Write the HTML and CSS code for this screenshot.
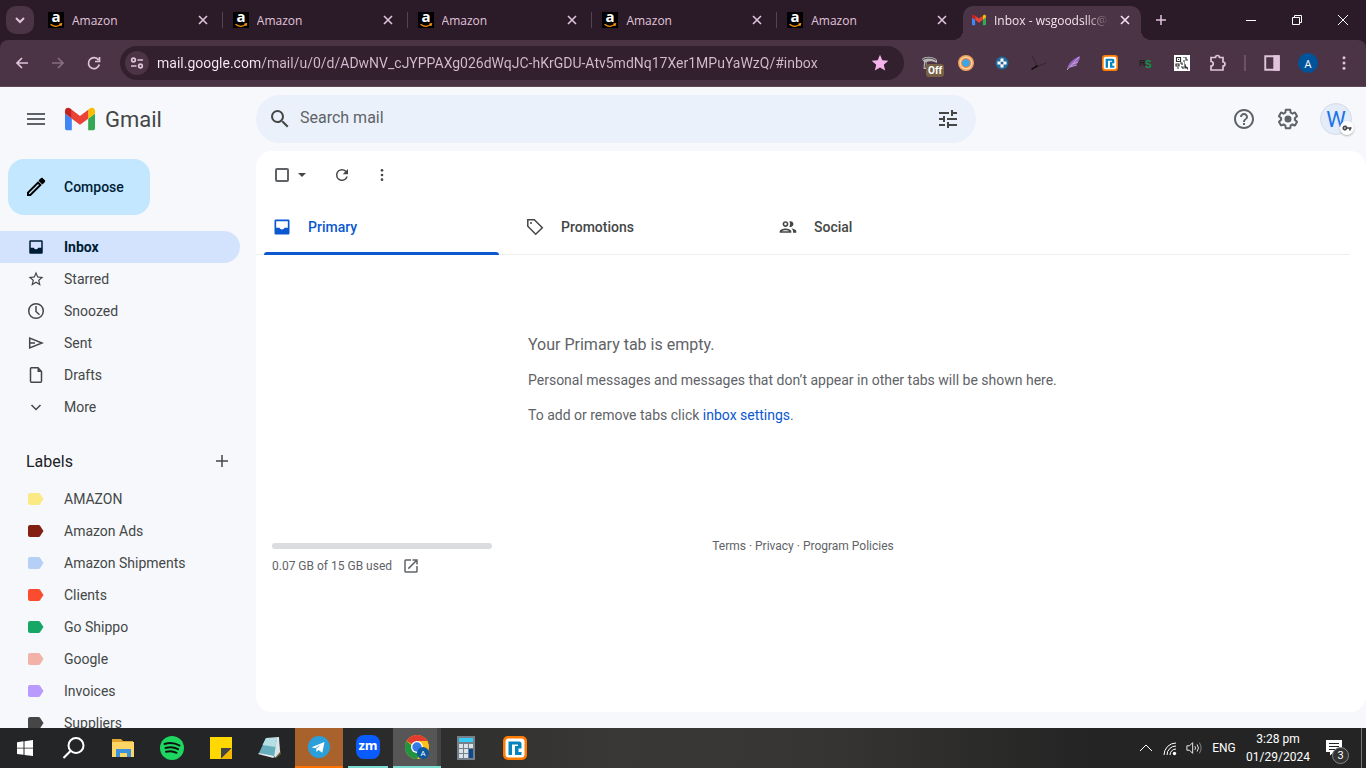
FILE: index.html
```html
<!DOCTYPE html>
<html lang="en">
  <head>
    <meta charset="utf-8">
    <title>Inbox - Gmail</title>
    <link rel="stylesheet" href="styles.css">
  </head>
  <body>
    <!-- shared icons -->
    <svg class="sprite" aria-hidden="true">
      <symbol id="amazon" viewBox="0 0 16 16">
        <rect width="16" height="16" fill="#000"/>
        <text x="8" y="10" text-anchor="middle" font-family="Open Sans, sans-serif" font-weight="700" font-size="15" fill="#fff">a</text>
        <path d="M2.5 12.2c3.3 2.4 7.5 2.4 10.3.4M11.3 12l2.2-.2-.6 2" fill="none" stroke="#f90" stroke-width="1.2"/>
      </symbol>
      <symbol id="close" viewBox="0 0 16 16"><path d="M4 4l8 8M12 4l-8 8" fill="none" stroke="currentColor" stroke-width="1.6"/></symbol>
      <symbol id="gmail" viewBox="52 42 88 66">
        <path fill="#4285f4" d="M58 108h14V74L52 59v43c0 3.32 2.69 6 6 6"/>
        <path fill="#34a853" d="M120 108h14c3.32 0 6-2.69 6-6V59l-20 15"/>
        <path fill="#fbbc04" d="M120 48v26l20-15v-8c0-7.42-8.47-11.65-14.4-7.2"/>
        <path fill="#ea4335" d="M72 74V48l24 18 24-18v26L96 92"/>
        <path fill="#c5221f" d="M52 51v8l20 15V48l-5.6-4.2c-5.94-4.45-14.4-.22-14.4 7.2"/>
      </symbol>
      <symbol id="refresh" viewBox="0 0 24 24"><path d="M17.65 6.35A7.96 7.96 0 0 0 12 4a8 8 0 1 0 7.73 10h-2.08A6 6 0 1 1 12 6c1.66 0 3.14.69 4.22 1.78L13 11h7V4l-2.35 2.35z"/></symbol>
      <symbol id="dots" viewBox="0 0 24 24"><circle cx="12" cy="5" r="2"/><circle cx="12" cy="12" r="2"/><circle cx="12" cy="19" r="2"/></symbol>
      <symbol id="inbox" viewBox="0 0 24 24"><path fill-rule="evenodd" d="M4.5 3h15A1.5 1.5 0 0 1 21 4.5v15a1.5 1.5 0 0 1-1.5 1.5h-15A1.5 1.5 0 0 1 3 19.5v-15A1.5 1.5 0 0 1 4.5 3zM5 5v8h4c.6 1.3 1.7 2 3 2s2.4-.7 3-2h4V5z"/></symbol>
      <symbol id="label" viewBox="0 0 16 12"><path d="M2 0h8.5c.8 0 1.3.3 1.7.9L15.5 6l-3.3 5.1c-.4.6-.9.9-1.7.9H2a2 2 0 0 1-2-2V2a2 2 0 0 1 2-2z"/></symbol>
      <symbol id="ringr" viewBox="0 0 24 24">
        <rect width="24" height="24" rx="5" fill="#ff7a00"/>
        <rect x="2.5" y="2.5" width="19" height="19" rx="3" fill="#fff"/>
        <path d="M5.500 19V5.500H16a2.500 2.500 0 0 1 2.500 2.500v4.500h-3V16h3v3H12v-9h3V8.500H9V19z" fill="#0684bd"/>
      </symbol>
    </svg>

    <header class="browser">
      <div class="tabstrip">
        <button class="tab-search" aria-label="Search tabs"><svg viewBox="0 0 16 16"><path d="M4 6l4 4 4-4"/></svg></button>
        <div class="tabs">
          <div class="tab"><svg class="favicon"><use href="#amazon"/></svg><span>Amazon</span><button aria-label="Close tab"><svg><use href="#close"/></svg></button></div>
          <div class="tab"><svg class="favicon"><use href="#amazon"/></svg><span>Amazon</span><button aria-label="Close tab"><svg><use href="#close"/></svg></button></div>
          <div class="tab"><svg class="favicon"><use href="#amazon"/></svg><span>Amazon</span><button aria-label="Close tab"><svg><use href="#close"/></svg></button></div>
          <div class="tab"><svg class="favicon"><use href="#amazon"/></svg><span>Amazon</span><button aria-label="Close tab"><svg><use href="#close"/></svg></button></div>
          <div class="tab"><svg class="favicon"><use href="#amazon"/></svg><span>Amazon</span><button aria-label="Close tab"><svg><use href="#close"/></svg></button></div>
          <div class="tab active"><svg class="favicon"><use href="#gmail"/></svg><span>Inbox - wsgoodsllc@g</span><button aria-label="Close tab"><svg><use href="#close"/></svg></button></div>
        </div>
        <button class="new-tab" aria-label="New tab"><svg viewBox="0 0 16 16"><path d="M8 3v10M3 8h10"/></svg></button>
        <div class="window-buttons">
          <button aria-label="Minimize"><svg viewBox="0 0 12 12"><path d="M1 6.5h10"/></svg></button>
          <button aria-label="Restore"><svg viewBox="0 0 12 12"><path d="M1.5 3.5h7v7h-7zM3.5 3.5v-2h7v7h-2"/></svg></button>
          <button aria-label="Close"><svg viewBox="0 0 12 12"><path d="M1 1l10 10M11 1L1 11"/></svg></button>
        </div>
      </div>

      <div class="toolbar">
        <div class="nav-buttons">
          <button aria-label="Back"><svg viewBox="0 0 16 16"><path d="M14 8H3M8 3L3 8l5 5"/></svg></button>
          <button class="off" aria-label="Forward"><svg viewBox="0 0 16 16"><path d="M2 8h11M8 3l5 5-5 5"/></svg></button>
          <button aria-label="Reload"><svg viewBox="0 0 16 16"><path d="M13.3 9.5A5.5 5.5 0 1 1 12.5 5M13.5 2v4.5H9"/></svg></button>
        </div>
        <div class="omnibox">
          <button class="site-info" aria-label="Site information"><svg viewBox="0 0 16 16"><circle cx="4.5" cy="5" r="1.8"/><path d="M8.5 5H14M2 11h5.5"/><circle cx="11.5" cy="11" r="1.8"/></svg></button>
          <input type="text" aria-label="Address" value="mail.google.com/mail/u/0/d/ADwNV_cJYPPAXg026dWqJC-hKrGDU-Atv5mdNq17Xer1MPuYaWzQ/#inbox">
          <button class="bookmark" aria-label="Bookmark"><svg viewBox="0 0 24 24"><path d="M12 17.27L18.18 21l-1.64-7.03L22 9.24l-7.19-.61L12 2 9.19 8.63 2 9.24l5.46 4.73L5.82 21z"/></svg></button>
        </div>
        <div class="extensions">
          <button class="ext-off" aria-label="Extension, off">
            <svg viewBox="0 0 16 16"><path d="M0 4c3-3 11-3 15 1v3c-4-2-8-2-10-1L4 14H1.5L2 7z" fill="#b9b6b8"/><path d="M1 4.5c4-2 9-2 13 1M4 7l-1 6" stroke="#4c484b" fill="none"/></svg>
            <span>Off</span>
          </button>
          <button aria-label="Browser extension"><svg viewBox="0 0 16 16"><circle cx="8" cy="8" r="8" fill="#f0a25e"/><circle cx="8" cy="8" r="6.5" fill="#f8d3a4"/><circle cx="8" cy="8" r="5" fill="#ef7f3b"/><circle cx="8" cy="8" r="3.7" fill="#35a8ea"/></svg></button>
          <button aria-label="Helper extension"><svg viewBox="0 0 16 16"><circle cx="8" cy="8" r="6.5" fill="#256a9c"/><path d="M8 3.5v9M3.5 8h9" stroke="#fff" stroke-width="3"/><circle cx="8" cy="8" r="1.5" fill="#256a9c"/></svg></button>
          <button aria-label="Sourcing extension"><svg viewBox="0 0 16 16"><path d="M2 1l5 9M2 14l14-6" stroke="#33272f" fill="none"/><path d="M1 14l6-4 1 1-6 4z" fill="#0c0a0b"/></svg></button>
          <button aria-label="Feather extension"><svg viewBox="0 0 16 16"><path d="M1 15c0-5 5-11 13-14 0 6-4 10-11 11z" fill="#9564bd"/><path d="M1 15L13 2M4 12l7-2M7 9l5-2" stroke="#d3b0ea" fill="none" stroke-width=".8"/></svg></button>
          <button aria-label="R extension"><svg><use href="#ringr"/></svg></button>
          <button aria-label="RS extension"><svg viewBox="0 0 16 16"><text x="1" y="11" font-family="Liberation Sans" font-size="9" font-weight="700" fill="#222">R</text><text x="7" y="13" font-family="Liberation Sans" font-size="10" font-weight="700" fill="#119447">S</text></svg></button>
          <button aria-label="QR extension"><svg viewBox="0 0 16 16"><path d="M0 0h16v16H0z" fill="#fff"/><path d="M2.5 2.5h4v4h-4zM9.5 2.5h1M12 2v3h2M9 6h2M2 9h3v2H2zM6 8h2v2M3 13h2M7 12h2v2M11 9v4h3M10 8h1M13 14h1" fill="none" stroke="#333" stroke-width="1.2"/><path d="M4 4h1v1H4zM11 10l3 3h-3z" fill="#333"/></svg></button>
          <button class="line" aria-label="Extensions"><svg viewBox="0 0 18 18"><path d="M2 3.5h4.5a2 2 0 0 1 4 0H14V8a2 2 0 0 1 0 4v4H2v-4a2.2 2.2 0 0 0 0-4.5z"/></svg></button>
          <hr>
          <button class="line" aria-label="Side panel"><svg viewBox="0 0 16 16"><path d="M2 2h12v12H2z"/><path d="M10 2h4v12h-4z" fill="currentColor"/></svg></button>
          <button class="profile" aria-label="Profile">A</button>
          <button class="line" aria-label="Browser menu"><svg class="solid"><use href="#dots"/></svg></button>
        </div>
      </div>
    </header>

    <div class="gmail">
      <header class="topbar">
        <div class="brand">
          <button aria-label="Main menu"><svg viewBox="0 0 24 24"><path d="M3 18h18v-2H3v2zm0-5h18v-2H3v2zm0-7v2h18V6H3z"/></svg></button>
          <a href="#inbox"><svg><use href="#gmail"/></svg>Gmail</a>
        </div>
        <form class="search">
          <button type="button" aria-label="Search"><svg viewBox="0 0 24 24"><path d="M15.5 14h-.79l-.28-.27A6.471 6.471 0 0 0 16 9.5 6.5 6.5 0 1 0 9.5 16c1.61 0 3.09-.59 4.23-1.57l.27.28v.79l5 4.99L20.49 19l-4.99-5zm-6 0C7.01 14 5 11.99 5 9.5S7.01 5 9.5 5 14 7.01 14 9.5 11.99 14 9.5 14z"/></svg></button>
          <input type="text" placeholder="Search mail" aria-label="Search mail">
          <button type="button" aria-label="Show search options"><svg viewBox="0 0 24 24"><path d="M3 17v2h6v-2H3zM3 5v2h10V5H3zm10 16v-2h8v-2h-8v-2h-2v6h2zM7 9v2H3v2h4v2h2V9H7zm14 4v-2H11v2h10zm-6-4h2V7h4V5h-4V3h-2v6z"/></svg></button>
        </form>
        <div class="account">
          <button aria-label="Support"><svg viewBox="0 0 24 24"><path d="M11 18h2v-2h-2v2zm1-16C6.48 2 2 6.48 2 12s4.48 10 10 10 10-4.48 10-10S17.52 2 12 2zm0 18c-4.41 0-8-3.59-8-8s3.59-8 8-8 8 3.59 8 8-3.59 8-8 8zm0-14c-2.21 0-4 1.79-4 4h2c0-1.1.9-2 2-2s2 .9 2 2c0 2-3 1.75-3 5h2c0-2.25 3-2.5 3-5 0-2.21-1.79-4-4-4z"/></svg></button>
          <button aria-label="Settings"><svg viewBox="0 0 24 24"><path d="M13.85 22.25h-3.7c-.74 0-1.36-.54-1.45-1.27l-.27-1.89c-.27-.14-.53-.29-.79-.46l-1.8.72c-.7.26-1.47-.03-1.81-.65L2.2 15.53c-.35-.66-.2-1.44.36-1.88l1.53-1.19c-.01-.15-.02-.3-.02-.46 0-.15.01-.31.02-.46l-1.52-1.19c-.59-.45-.74-1.26-.37-1.88l1.85-3.19c.34-.62 1.11-.9 1.79-.63l1.81.73c.26-.17.52-.32.78-.46l.27-1.91c.09-.7.71-1.25 1.44-1.25h3.7c.74 0 1.36.54 1.45 1.27l.27 1.89c.27.14.53.29.79.46l1.8-.72c.71-.26 1.48.03 1.82.65l1.84 3.18c.36.66.2 1.44-.36 1.88l-1.52 1.19c.01.15.02.3.02.46s-.01.31-.02.46l1.52 1.19c.56.45.72 1.23.37 1.86l-1.86 3.22c-.34.62-1.11.9-1.8.63l-1.8-.72c-.26.17-.52.32-.78.46l-.27 1.91c-.1.68-.72 1.22-1.46 1.22zm-3.23-2h2.76l.37-2.55.53-.22c.44-.18.88-.44 1.34-.78l.45-.34 2.38.96 1.38-2.4-2.03-1.58.07-.56c.03-.26.06-.51.06-.78s-.03-.53-.06-.78l-.07-.56 2.03-1.58-1.39-2.4-2.39.96-.45-.35c-.42-.32-.87-.58-1.33-.77l-.52-.22-.37-2.55h-2.76l-.37 2.55-.53.21c-.44.19-.88.44-1.34.79l-.45.33-2.38-.95-1.39 2.39 2.03 1.58-.07.56a7 7 0 0 0-.06.79c0 .26.02.53.06.78l.07.56-2.03 1.58 1.38 2.4 2.39-.96.45.35c.43.33.86.58 1.33.77l.53.22.38 2.55z"/><circle cx="12" cy="12" r="3.5"/></svg></button>
          <button class="avatar" aria-label="Google Account">W
            <span class="key"><svg viewBox="0 0 24 24"><path d="M12.65 10A6 6 0 1 0 12.65 14H17v4h4v-4h2v-4H12.65zM7 14a2 2 0 1 1 0-4 2 2 0 0 1 0 4z"/></svg></span>
          </button>
        </div>
      </header>

      <div class="columns">
        <aside class="sidebar">
          <button class="compose"><svg viewBox="0 0 24 24"><path d="M14.06 9.02l.92.92L5.92 19H5v-.92l9.06-9.06M17.66 3c-.25 0-.51.1-.7.29l-1.83 1.83 3.75 3.75 1.83-1.83c.39-.39.39-1.02 0-1.41l-2.34-2.34c-.2-.2-.45-.29-.71-.29zm-3.6 3.19L3 17.25V21h3.75L17.81 9.94l-3.75-3.75z"/><path d="M14.5 5.7l3.8 3.8 2.5-2.5c.5-.5.5-1.3 0-1.8l-2-2c-.5-.5-1.3-.5-1.8 0z"/></svg>Compose</button>
          <nav>
            <a class="current" href="#inbox"><svg><use href="#inbox"/></svg>Inbox</a>
            <a href="#starred"><svg viewBox="0 0 24 24"><path d="M22 9.24l-7.19-.62L12 2 9.19 8.63 2 9.24l5.46 4.73L5.82 21 12 17.27 18.18 21l-1.63-7.03L22 9.24zM12 15.4l-3.76 2.27 1-4.28-3.32-2.88 4.38-.38L12 6.1l1.71 4.04 4.38.38-3.32 2.88 1 4.28L12 15.4z"/></svg>Starred</a>
            <a href="#snoozed"><svg viewBox="0 0 20 20" class="stroke"><circle cx="10" cy="10" r="7.3"/><path d="M10 5v5.5l3.5 3.2"/></svg>Snoozed</a>
            <a href="#sent"><svg viewBox="0 0 20 20" class="stroke"><path d="M3.7 5v10L16 10zM4 10h5"/></svg>Sent</a>
            <a href="#drafts"><svg viewBox="0 0 20 20" class="stroke"><path d="M12 2.8H5.5a1 1 0 0 0-1 1v12.5a1 1 0 0 0 1 1h9a1 1 0 0 0 1-1V6.5z"/><path d="M11.5 3v4h4z" class="fold"/></svg>Drafts</a>
            <a href="#more"><svg viewBox="0 0 20 20" class="stroke"><path d="M5.5 8l4.5 4.5L14.5 8"/></svg>More</a>
          </nav>
          <div class="labels-head">
            <h2>Labels</h2>
            <button aria-label="Create new label"><svg viewBox="0 0 20 20" class="stroke"><path d="M10 4v12M4 10h12"/></svg></button>
          </div>
          <nav class="labels">
            <a href="#amazon-mail"><svg class="yellow"><use href="#label"/></svg>AMAZON</a>
            <a href="#ads"><svg class="maroon"><use href="#label"/></svg>Amazon Ads</a>
            <a href="#shipments"><svg class="blue"><use href="#label"/></svg>Amazon Shipments</a>
            <a href="#clients"><svg class="red"><use href="#label"/></svg>Clients</a>
            <a href="#goshippo"><svg class="green"><use href="#label"/></svg>Go Shippo</a>
            <a href="#google"><svg class="pink"><use href="#label"/></svg>Google</a>
            <a href="#invoices"><svg class="purple"><use href="#label"/></svg>Invoices</a>
            <a href="#suppliers"><svg class="dark"><use href="#label"/></svg>Suppliers</a>
          </nav>
        </aside>

        <main class="mail">
          <div class="actions">
            <input type="checkbox" aria-label="Select">
            <button class="caret" aria-label="Select options"><svg viewBox="0 0 20 20"><path d="M6 8h8l-4 4z"/></svg></button>
            <button aria-label="Refresh"><svg class="medium"><use href="#refresh"/></svg></button>
            <button aria-label="More options"><svg class="small"><use href="#dots"/></svg></button>
          </div>
          <div class="mail-tabs">
            <button class="selected"><svg><use href="#inbox"/></svg>Primary</button>
            <button><svg viewBox="0 0 20 20" class="stroke"><path d="M2.8 2.8h6.5l8 8-6.6 6.5-7.9-8z"/><circle cx="6" cy="6" r="1" fill="currentColor" stroke="none"/></svg>Promotions</button>
            <button><svg viewBox="0 0 24 24"><path d="M9 13.75c-2.34 0-7 1.17-7 3.5V19h14v-1.75c0-2.33-4.66-3.5-7-3.5zM4.34 17c.84-.58 2.87-1.25 4.66-1.25s3.82.67 4.66 1.25H4.34zM9 12c1.93 0 3.5-1.57 3.5-3.5S10.93 5 9 5 5.5 6.57 5.5 8.5 7.07 12 9 12zm0-5c.83 0 1.5.67 1.5 1.5S9.83 10 9 10s-1.5-.67-1.5-1.5S8.17 7 9 7zm7.04 6.81c1.16.84 1.96 1.96 1.96 3.44V19h4v-1.75c0-2.02-3.5-3.17-5.96-3.44zM15 12c1.93 0 3.5-1.57 3.5-3.5S16.93 5 15 5c-.54 0-1.04.13-1.5.35.63.89 1 1.98 1 3.15s-.37 2.26-1 3.15c.46.22.96.35 1.5.35z"/></svg>Social</button>
          </div>
          <section class="empty">
            <h3>Your Primary tab is empty.</h3>
            <p>Personal messages and messages that don’t appear in other tabs will be shown here.</p>
            <p>To add or remove tabs click <a href="#settings">inbox settings</a>.</p>
          </section>
          <footer>
            <div class="storage">
              <div class="meter"></div>
              <a href="#storage">0.07 GB of 15 GB used <svg viewBox="0 0 24 24"><path d="M19 19H5V5h7V3H5a2 2 0 0 0-2 2v14a2 2 0 0 0 2 2h14c1.1 0 2-.9 2-2v-7h-2v7zM14 3v2h3.59l-9.83 9.83 1.41 1.41L19 6.41V10h2V3h-7z"/></svg></a>
            </div>
            <div class="legal"><a href="#terms">Terms</a> · <a href="#privacy">Privacy</a> · <a href="#policies">Program Policies</a></div>
          </footer>
        </main>
      </div>
    </div>

    <div class="taskbar">
      <div class="apps">
        <button aria-label="Start"><svg viewBox="0 0 24 24"><path d="M4 6.3l6.5-1v6.4H4zM11.5 5.2L20 4v7.7h-8.5zM4 12.5h6.5v6.3L4 17.9zM11.5 12.5H20V20l-8.5-1.1z" fill="#fff"/></svg></button>
        <button aria-label="Search"><svg viewBox="0 0 24 24"><circle cx="14" cy="9.5" r="7.5" fill="none" stroke="#fff" stroke-width="2"/><path d="M8.5 15L1.5 22" stroke="#fff" stroke-width="2.2"/></svg></button>
        <button aria-label="File Explorer"><svg viewBox="0 0 24 24"><path d="M1 3h9l2 2h10v16H1z" fill="#e2a62c"/><path d="M1 6h22v15H1z" fill="#ffd565"/><path d="M5 21v-8h15v8h-4v-4H9v4z" fill="#3c93dc"/></svg></button>
        <button aria-label="Spotify"><svg viewBox="0 0 24 24"><circle cx="12" cy="12" r="12" fill="#1ed760"/><path d="M4.5 8c5-1.5 10.5-1 15 1.5M5.5 12c4.5-1.3 9-.8 12.5 1.2M6 15.7c4-1 7.5-.6 10.5 1.1" fill="none" stroke="#111" stroke-width="2" stroke-linecap="round"/></svg></button>
        <button aria-label="Sticky Notes"><svg viewBox="0 0 24 24"><path d="M1 1h22v22H1z" fill="#ffd800"/><path d="M12 12h11L12 23z" fill="#444"/><path d="M23 12v11H12z" fill="#f5b700"/></svg></button>
        <button aria-label="Notepad"><svg viewBox="0 0 24 24"><path d="M20 3l3 15-5 4z" fill="#6b5a3b"/><path d="M8 2l13-1 1 15-5 6z" fill="#dbe6ea"/><path d="M8 2h11l-3 19L1 17z" fill="#67aebd"/><path d="M8 2h11l-1.5 9L4.5 9z" fill="#b5dfe5"/><path d="M1 17l15 3-.5 2L0 18z" fill="#e8eef0"/></svg></button>
        <button class="telegram" aria-label="Telegram"><svg viewBox="0 0 24 24"><circle cx="12" cy="12" r="11" fill="#2b9fd9"/><path d="M4.5 12.3L17.5 7l-2.2 10.8-3.8-2.7-2 2-.4-3.3 5-4.3-6 3.7z" fill="#fff"/></svg></button>
        <button class="zoom" aria-label="Zoom"><span>zm</span></button>
        <button class="chrome" aria-label="Chrome"><svg viewBox="0 0 24 24"><circle cx="12" cy="12" r="12" fill="#fbc116"/><path d="M12 12L1.6 6A12 12 0 0 1 22.4 6H12z" fill="#e33b2e"/><path d="M1.6 6A12 12 0 0 0 12 24l5.2-9H12z" fill="#229342"/><circle cx="12" cy="12" r="6" fill="#fff"/><circle cx="12" cy="12" r="4.7" fill="#3879e8"/><circle cx="18" cy="18" r="6" fill="#0b57a0"/><text x="18" y="21" text-anchor="middle" font-family="Open Sans" font-size="8" fill="#fff">A</text></svg></button>
        <button aria-label="Calculator"><svg viewBox="0 0 24 24"><path d="M3 0h18v24H3z" fill="#75808a"/><path d="M5 2h14v4H5z" fill="#35cbf5"/><path d="M5 8h4v4H5zM10 8h4v4h-4zM15 8h4v4h-4zM5 13h4v4H5zM10 13h4v4h-4zM5 18h4v4H5zM10 18h4v4h-4z" fill="#dce3e8"/><path d="M15 13h4v9h-4z" fill="#0c4a8d"/></svg></button>
        <button aria-label="R app"><svg><use href="#ringr"/></svg></button>
      </div>
      <div class="tray">
        <button aria-label="Show hidden icons"><svg viewBox="0 0 16 16"><path d="M2 11l6-6 6 6"/></svg></button>
        <button aria-label="Network"><svg viewBox="0 0 16 16"><path d="M2 15A12 12 0 0 1 14 3M5 15a9 9 0 0 1 9-9M8 15a6 6 0 0 1 6-6"/><circle cx="12.5" cy="13.5" r="1.7" fill="#fff" stroke="none"/></svg></button>
        <button aria-label="Volume"><svg viewBox="0 0 18 16"><path d="M1 5.5h3l3.5-3.5v12L4 10.5H1zM10 6q1.5 2 0 4M12.5 4q3 4 0 8"/><path d="M15 2q4 6 0 12" opacity=".5"/></svg></button>
        <button class="lang">ENG</button>
        <div class="clock"><time>3:28 pm</time><span>01/29/2024</span></div>
        <button class="notify" aria-label="Notifications"><svg viewBox="0 0 16 16"><path d="M0 0h16v12H8l-4 3.5V12H0z" fill="#fff" stroke="none"/><path d="M3 3.5h10M3 6.5h10M3 9.5h6" stroke="#222"/></svg><span>3</span></button>
      </div>
    </div>
  </body>
</html>
```
FILE: styles.css
```css
* {
  box-sizing: border-box;
}
body {
  margin: 0;
  height: 100vh;
  display: flex;
  flex-direction: column;
  overflow: hidden;
  background: #f6f8fc;
  color: #202124;
  font-family: Roboto, "Liberation Sans", sans-serif;
  font-size: 14px;
}
button {
  display: flex;
  align-items: center;
  justify-content: center;
  padding: 0;
  border: 0;
  background: none;
  color: inherit;
  font: inherit;
  cursor: pointer;
}
a {
  color: inherit;
  text-decoration: none;
}
svg {
  display: block;
  flex: none;
  width: 20px;
  height: 20px;
  fill: currentColor;
}
.sprite {
  display: none;
}
.stroke {
  fill: none;
  stroke: currentColor;
  stroke-width: 1.5;
}

/* browser frame */
.browser {
  background: #2b1b29;
  color: #e0c4db;
  font-family: "Open Sans", "Noto Sans", sans-serif;
  font-size: 12px;
}
.browser svg {
  width: 16px;
  height: 16px;
}
.tabstrip {
  display: flex;
  height: 40px;
  padding: 6px 0 0 6px;
}
.tab-search {
  width: 28px;
  height: 28px;
  border-radius: 10px;
  background: #4a3445;
}
.tab-search svg,
.new-tab svg {
  fill: none;
  stroke: currentColor;
  stroke-width: 2;
}
.tabs {
  display: flex;
  flex: 0 1 1102px;
  margin-left: 5px;
}
.tab {
  position: relative;
  display: flex;
  flex: 1;
  align-items: center;
  gap: 8px;
  height: 28px;
  padding: 0 13px 0 9px;
  min-width: 0;
}
.tab span {
  flex: 1;
  overflow: hidden;
  white-space: nowrap;
}
.tab:not(.active)::after {
  content: "";
  position: absolute;
  right: 1px;
  width: 1px;
  height: 16px;
  background: #59414f;
}
.tab:nth-child(5)::after {
  display: none;
}
.tab.active {
  flex: 0 0 178px;
  height: 34px;
  padding: 0 8px 6px 9px;
  border-radius: 10px 10px 0 0;
  background: #4a3445;
  color: #f4e3f1;
}
.tab.active .favicon {
  height: 14px;
  width: 14px;
}
.tab.active span {
  mask-image: linear-gradient(90deg, #000 80%, transparent);
}
.tab.active::before,
.tab.active::after {
  content: "";
  position: absolute;
  bottom: 0;
  left: -10px;
  width: 10px;
  height: 10px;
  background: radial-gradient(circle at 0 0, transparent 10px, #4a3445 10px);
}
.tab.active::after {
  left: 100%;
  background: radial-gradient(circle at 100% 0, transparent 10px, #4a3445 10px);
}
.new-tab {
  width: 28px;
  height: 28px;
  margin-left: 6px;
}
.new-tab svg {
  stroke-width: 1.5;
}
.window-buttons {
  display: flex;
  margin-left: auto;
  color: #fff;
}
.window-buttons button {
  width: 46px;
  height: 28px;
}
.window-buttons svg {
  width: 12px;
  height: 12px;
  fill: none;
  stroke: currentColor;
}
.toolbar {
  display: flex;
  align-items: center;
  gap: 8px;
  height: 47px;
  padding: 0 4px;
  border-bottom: 1px solid #5e4a59;
  border-radius: 8px 8px 0 0;
  background: #4a3445;
}
.nav-buttons {
  display: flex;
}
.nav-buttons button {
  width: 36px;
  height: 34px;
}
.nav-buttons svg,
.site-info svg,
.line svg {
  fill: none;
  stroke: currentColor;
  stroke-width: 1.7;
}
.nav-buttons .off {
  opacity: 0.4;
}
.omnibox {
  display: flex;
  align-items: center;
  flex: 1;
  height: 34px;
  padding: 0 14px 0 5px;
  border-radius: 17px;
  background: #33202f;
}
.site-info {
  width: 24px;
  height: 24px;
  border-radius: 12px;
  background: #4a3445;
}
.omnibox input {
  flex: 1;
  min-width: 0;
  margin-left: 8px;
  padding: 0;
  border: 0;
  outline: 0;
  /* host name is brighter than the path */
  background: linear-gradient(90deg, #fbeaf8 103px, #d5bdd1 103px);
  background-clip: text;
  color: transparent;
  font-family: Roboto, sans-serif;
  font-size: 14px;
}
.bookmark {
  color: #f5b3ec;
}
.bookmark svg {
  width: 20px;
  height: 20px;
}
.extensions {
  display: flex;
  align-items: center;
}
.extensions button {
  width: 36px;
  height: 34px;
}
.extensions hr {
  width: 2px;
  height: 16px;
  margin: 0 8px;
  border: 0;
  background: #6b5365;
}
.extensions .line svg {
  width: 18px;
  height: 18px;
}
.extensions .line .solid {
  fill: currentColor;
  stroke: none;
}
.ext-off {
  position: relative;
}
.ext-off span {
  position: absolute;
  left: 14px;
  bottom: 3px;
  padding: 0 2px;
  border-radius: 3px;
  background: #786044;
  color: #fff;
  font-family: Roboto, sans-serif;
  font-size: 10px;
  font-weight: 700;
  line-height: 13px;
}
.extensions .profile {
  width: 20px;
  height: 20px;
  margin: 0 8px;
  border-radius: 10px;
  background: #00549c;
  color: #fff;
  font-size: 11px;
}

/* gmail */
.gmail {
  display: flex;
  flex: 1;
  flex-direction: column;
  min-height: 0;
  color: #444746;
}
.topbar {
  display: flex;
  align-items: center;
  height: 64px;
}
.brand {
  display: flex;
  align-items: center;
  width: 256px;
  padding-left: 24px;
}
.brand button {
  color: #5f6368;
}
.brand button svg,
.search button svg,
.account button svg {
  width: 24px;
  height: 24px;
}
.brand a {
  display: flex;
  align-items: center;
  gap: 10px;
  margin-left: 17px;
  font-size: 22px;
}
.brand a svg {
  width: 30px;
  height: 24px;
}
.search {
  display: flex;
  align-items: center;
  flex: 0 1 720px;
  height: 48px;
  padding: 0 16px 0 12px;
  border-radius: 24px;
  background: #eaf1fb;
}
.search input {
  flex: 1;
  min-width: 0;
  margin: 0 8px;
  padding: 0 0 3px;
  border: 0;
  outline: 0;
  background: none;
  font: inherit;
  font-size: 16px;
}
.search input::placeholder {
  color: #5f6368;
}
.account {
  display: flex;
  align-items: center;
  gap: 20px;
  margin-left: auto;
  padding-right: 14px;
  color: #5f6368;
}
.avatar {
  position: relative;
  width: 32px;
  height: 32px;
  border: 1px solid #d5dcea;
  border-radius: 16px;
  background: #e4ecfa;
  color: #1a73e8;
  font-size: 22px;
}
.key {
  position: absolute;
  right: -3px;
  bottom: -1px;
  padding: 2px;
  border-radius: 7px;
  background: #fff;
  color: #444746;
  box-shadow: 0 1px 2px #8889;
}
.avatar .key svg {
  width: 10px;
  height: 10px;
}
.columns {
  display: flex;
  flex: 1;
  min-height: 0;
}
.sidebar {
  width: 256px;
  padding-top: 8px;
  overflow: hidden;
}
.compose {
  justify-content: flex-start;
  gap: 16px;
  min-width: 142px;
  height: 56px;
  margin: 0 0 16px 8px;
  padding: 0 23px 0 16px;
  border-radius: 16px;
  background: #c2e7ff;
  color: #001d35;
  font-weight: 500;
}
.compose svg {
  width: 24px;
  height: 24px;
  color: #000;
}
.sidebar nav a {
  display: flex;
  align-items: center;
  gap: 18px;
  height: 32px;
  margin-right: 16px;
  padding-left: 26px;
}
.sidebar nav .current {
  border-radius: 0 16px 16px 0;
  background: #d3e3fd;
  color: #001d35;
  font-weight: 700;
}
.sidebar nav a svg:not(.stroke) {
  padding: 1px;
}
.sidebar nav .current svg {
  padding: 0;
}
.fold {
  fill: currentColor;
  stroke: none;
}
.labels-head {
  display: flex;
  align-items: center;
  justify-content: space-between;
  height: 60px;
  padding: 16px 24px 0 26px;
}
.labels-head h2 {
  margin: 0;
  color: #202124;
  font-size: 16px;
  font-weight: 400;
}
.sidebar .labels svg {
  height: 14px;
}
.yellow {
  color: #fbe983;
}
.maroon {
  color: #822111;
}
.blue {
  color: #b6cff5;
}
.red {
  color: #fb4c2f;
}
.green {
  color: #16a766;
}
.pink {
  color: #f2b2a8;
}
.purple {
  color: #b99aff;
}
.dark {
  color: #464646;
}
.mail {
  flex: 1;
  margin-bottom: 16px;
  padding-right: 16px;
  border-radius: 16px;
  background: #fff;
}
.actions {
  display: flex;
  align-items: center;
  height: 48px;
  padding-left: 19px;
}
.actions input {
  appearance: none;
  width: 14px;
  height: 14px;
  margin: 0;
  border: 2px solid #5f6368;
  border-radius: 2px;
}
.actions button {
  width: 40px;
}
.actions .caret {
  width: 20px;
  margin: 0 10px 0 3px;
}
.actions .medium {
  width: 18px;
  height: 18px;
}
.actions .small {
  width: 16px;
  height: 16px;
}
.mail-tabs {
  display: flex;
  height: 56px;
  border-bottom: 1px solid #eceff1;
}
.mail-tabs button {
  position: relative;
  justify-content: flex-start;
  gap: 16px;
  width: 253px;
  padding-left: 16px;
  font-weight: 500;
}
.mail-tabs .selected {
  color: #0b57d0;
}
.mail-tabs .selected::after {
  content: "";
  position: absolute;
  right: 10px;
  bottom: -1px;
  left: 8px;
  height: 3px;
  border-radius: 3px 3px 0 0;
  background: #0b57d0;
}
.empty {
  padding: 80px 0 0 272px;
  color: #5f6368;
}
.empty h3 {
  margin: 0 0 15px;
  font-size: 16px;
  font-weight: 400;
  line-height: 20px;
}
.empty p {
  margin: 0 0 15px;
  line-height: 20px;
}
.empty a {
  color: #0b57d0;
}
.mail footer {
  display: grid;
  grid-template-columns: repeat(3, 1fr);
  margin-top: 113px;
  color: #5f6368;
  font-size: 12px;
  line-height: 16px;
}
.storage {
  width: 220px;
  margin: 5px 0 0 16px;
}
.meter {
  height: 6px;
  margin-bottom: 8px;
  border-radius: 3px;
  background: #dadce0;
}
.storage a {
  display: flex;
  align-items: center;
  gap: 10px;
}
.storage svg {
  width: 18px;
  height: 18px;
}
.legal {
  text-align: center;
}

/* taskbar */
.taskbar {
  display: flex;
  justify-content: space-between;
  height: 40px;
  background: linear-gradient(90deg, #242526 20%, #393836 45%, #363533 60%, #242424 80%);
  color: #fff;
  font-size: 12px;
}
.apps {
  display: flex;
  gap: 1px;
  padding-left: 1px;
}
.apps button {
  width: 48px;
}
.apps svg {
  width: 24px;
  height: 24px;
}
.telegram {
  border-bottom: 2px solid #ff7200;
  background: #a9622c;
}
.zoom,
.chrome {
  border-bottom: 2px solid #7ddcd0;
}
.apps .zoom {
  width: 40px;
  margin: 0 4px;
}
.zoom span {
  width: 24px;
  height: 24px;
  border-radius: 8px;
  background: #0b5cff;
  font-family: "Open Sans", sans-serif;
  font-size: 13px;
  font-weight: 700;
  line-height: 21px;
}
.chrome {
  background: linear-gradient(90deg, #565656 44px, #444 44px);
}
.tray {
  display: flex;
  align-items: center;
  padding-right: 4px;
}
.tray button {
  width: 24px;
}
.tray svg {
  width: 16px;
  height: 16px;
  fill: none;
  stroke: #fff;
}
.tray .lang {
  width: 36px;
}
.clock {
  display: flex;
  flex-direction: column;
  width: 72px;
  text-align: center;
  line-height: 18px;
}
.tray .notify {
  position: relative;
  width: 48px;
  height: 40px;
  padding-right: 8px;
  border-right: 1px solid #777;
}
.notify span {
  position: absolute;
  right: 12px;
  bottom: 4px;
  width: 17px;
  height: 17px;
  border: 1px solid #888;
  border-radius: 9px;
  background: #333;
  font-size: 11px;
  line-height: 15px;
}
```
